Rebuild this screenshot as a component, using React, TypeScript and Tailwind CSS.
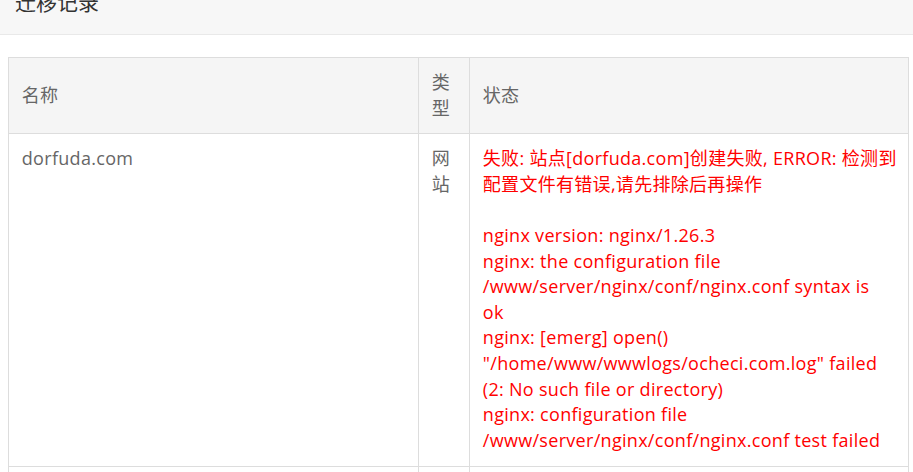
import React from "react";

const errLines = [
  "失败: 站点[dorfuda.com]创建失败, ERROR: 检测到",
  "配置文件有错误,请先排除后再操作",
  "\u00a0",
  "nginx version: nginx/1.26.3",
  "nginx: the configuration file",
  "/www/server/nginx/conf/nginx.conf syntax is",
  "ok",
  "nginx: [emerg] open()",
  "\"/home/www/wwwlogs/ocheci.com.log\" failed",
  "(2: No such file or directory)",
  "nginx: configuration file",
  "/www/server/nginx/conf/nginx.conf test failed",
];

export default function App() {
  return (
    <div
      className="w-[913px] h-[472px] overflow-hidden bg-white"
      style={{ fontFamily: '"Open Sans", "Noto Sans CJK SC", sans-serif' }}
    >
      <div className="h-[35px] bg-[#f7f7f7] border-b border-[#e9e9e9] overflow-hidden">
        <div className="-mt-[8px] pl-[15px] text-[21px] leading-[21px] text-[#333]">
          迁移记录
        </div>
      </div>
      <div className="pl-[8px] pt-[22px]">
        <table className="w-[901px] border-collapse border border-[#dddddd] table-fixed text-[18px] leading-[25.6px] tracking-[0.3px] text-[#666]">
          <colgroup>
            <col className="w-[410px]" />
            <col className="w-[51px]" />
            <col />
          </colgroup>
          <thead>
            <tr className="bg-[#f5f5f5]">
              <th className="border border-[#dddddd] px-[12.8px] py-[12px] text-left font-normal align-middle">
                名称
              </th>
              <th className="border border-[#dddddd] px-[12.8px] py-[12px] text-left font-normal align-middle">
                类型
              </th>
              <th className="border border-[#dddddd] px-[12.8px] py-[12px] text-left font-normal align-middle">
                状态
              </th>
            </tr>
          </thead>
          <tbody>
            <tr>
              <td className="border border-[#dddddd] px-[12.8px] pt-[12px] pb-[12.5px] align-top">
                dorfuda.com
              </td>
              <td className="border border-[#dddddd] px-[12.8px] pt-[12px] pb-[12.5px] align-top">
                网站
              </td>
              <td className="border border-[#dddddd] px-[12.8px] pt-[12px] pb-[12.5px] align-top text-[#ff0000]">
                {errLines.map((l, i) => (
                  <div key={i} className="whitespace-nowrap">
                    {l}
                  </div>
                ))}
              </td>
            </tr>
            <tr>
              <td className="border border-[#dddddd] px-[12.8px] py-[12px]">&nbsp;</td>
              <td className="border border-[#dddddd] px-[12.8px] py-[12px]">&nbsp;</td>
              <td className="border border-[#dddddd] px-[12.8px] py-[12px]">&nbsp;</td>
            </tr>
          </tbody>
        </table>
      </div>
    </div>
  );
}
